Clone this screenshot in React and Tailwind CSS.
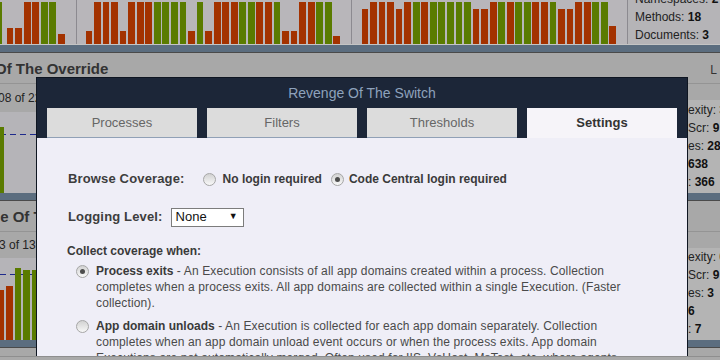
import React from "react";

// bar data: [colour, height]
const seg1 = [["r", 16], ["r", 16], ["r", 42], ["r", 42], ["g", 42], ["g", 42], ["r", 10]];
const seg2 = [
  ["r", 13], ["r", 42], ["r", 42], ["r", 42], ["r", 13], ["r", 42], ["r", 42], ["r", 42],
  ["g", 42], ["g", 42], ["g", 42], ["g", 42], ["r", 13], ["g", 42], ["r", 13], ["r", 42],
  ["r", 42], ["r", 42], ["g", 42], ["g", 42], ["r", 42], ["r", 42], ["g", 42], ["r", 13],
  ["r", 13], ["r", 42], ["r", 42], ["g", 42], ["g", 42], ["r", 8],
];
const seg3 = [
  ["r", 35], ["r", 42], ["r", 42], ["r", 42], ["r", 35], ["r", 42], ["g", 42], ["r", 42],
  ["g", 42], ["g", 42], ["g", 42], ["g", 42], ["g", 42], ["r", 35], ["r", 35], ["r", 42],
  ["g", 42], ["r", 42], ["g", 42], ["g", 42], ["r", 42], ["r", 42], ["g", 42], ["r", 35],
  ["r", 35], ["r", 42], ["r", 42], ["g", 42], ["g", 42], ["r", 18],
];

function Bars({ data }) {
  return data.map(([c, h], i) => (
    <div key={i} className="w-[8.55px] shrink-0 h-full flex items-end">
      <div
        className={`w-[6.8px] ${c === "g" ? "bg-[#5a7b00]" : "bg-[#a33200]"}`}
        style={{ height: h }}
      />
    </div>
  ));
}

function Stat({ label, value }) {
  return (
    <div className="h-[18px] leading-[18px] whitespace-nowrap text-[12px] text-[#222]">
      <span>
        {label}
        <b className="font-bold text-[#111]">{value}</b>
      </span>
    </div>
  );
}

function Radio({ checked, className = "" }) {
  return (
    <span
      className={`w-[13px] h-[13px] shrink-0 rounded-full border border-[#a6a6a6] bg-linear-to-b from-[#d2d2d2] to-[#f8f8f8] flex items-center justify-center ${className}`}
    >
      {checked && <span className="w-[5px] h-[5px] rounded-full bg-[#4d4d4d]" />}
    </span>
  );
}

const Dashes = ({ top }) => (
  <div
    className="absolute left-0 right-0 h-[1px] bg-[repeating-linear-gradient(90deg,#1e2a8c_0_6px,transparent_6px_10px)]"
    style={{ top }}
  />
);

export default function App() {
  return (
    <div className="relative w-[720px] h-[360px] overflow-hidden bg-[#a8a8a8] font-['Liberation_Sans',Arial,sans-serif]">
      {/* top chart strip */}
      <div className="flex h-[44px] bg-[#b8b6ba] pt-[2px]">
        <div className="w-[76px] shrink-0 flex items-end overflow-hidden">
          <div className="w-[2px] h-[42px] bg-[#5a7b00] shrink-0" />
          <div className="ml-[4.7px] flex h-full">
            <Bars data={seg1} />
          </div>
        </div>
        <div className="w-[1px] bg-[#8c8a90] -mt-[2px]" />
        <div className="w-[274px] shrink-0 flex pl-[8.5px] overflow-hidden">
          <Bars data={seg2} />
        </div>
        <div className="w-[1px] bg-[#8c8a90] -mt-[2px]" />
        <div className="w-[275px] shrink-0 flex pl-[9.5px] overflow-hidden">
          <Bars data={seg3} />
        </div>
        <div className="w-[1px] bg-[#8c8a90] -mt-[2px]" />
        <div className="flex-1 overflow-hidden -mt-[2px] pl-[7px] bg-[#b5b4b7]">
          <div className="-mt-[10px]">
            <Stat label="Namespaces: " value="2" />
            <Stat label="Methods: " value="18" />
            <Stat label="Documents: " value="3" />
          </div>
        </div>
      </div>
      <div className="h-[1px] bg-[#c4c4c4]" />
      <div className="h-[8px] bg-[#5b6d7f] border-b border-[#4a4a4a]" />

      {/* section 1 */}
      <div className="h-[31px] pt-[3px] flex items-center justify-between border-b border-[#949494]">
        <span className="ml-[-5px] text-[15px] font-bold text-[#333] whitespace-nowrap">Of The Override</span>
        <span className="mr-[3px] text-[12px] text-[#333]">L</span>
      </div>
      <div className="flex h-[109px]">
        <div className="flex-1 flex flex-col">
          <div className="h-[28px] flex items-center text-[12px] text-[#222] ml-[-2px]">08 of 22</div>
          <div className="relative flex-1 bg-[#b5b4b8] overflow-hidden">
            <Dashes top={22} />
            <div className="relative flex h-full ml-[-3px]">
              <Bars data={[["g", 66]]} />
            </div>
          </div>
        </div>
        <div className="w-[32px] mt-[16px] pt-[1px] bg-[#b4b4b4] overflow-hidden">
          <Stat label="exity: " value="3" />
          <Stat label="Scr: " value="9" />
          <Stat label="es: " value="28" />
          <Stat label="" value="638" />
          <Stat label=": " value="366" />
        </div>
      </div>
      <div className="h-[8px] bg-[#5b6d7f] border-b border-[#4a4a4a]" />

      {/* section 2 */}
      <div className="h-[31px] pt-[2px] flex items-center border-b border-[#949494]">
        <span className="ml-[-54px] text-[15px] font-bold text-[#333] whitespace-nowrap">Revenge Of The Switch</span>
      </div>
      <div className="flex h-[108px]">
        <div className="flex-1 flex flex-col">
          <div className="h-[26px] flex items-center text-[12px] text-[#222] ml-[-1px]">3 of 137</div>
          <div className="relative flex-1 bg-[#b5b4b8] overflow-hidden">
            <Dashes top={16} />
            <div className="relative flex h-full ml-[-2.5px]">
              <Bars data={[["r", 50], ["r", 54], ["g", 72], ["g", 70], ["g", 70]]} />
            </div>
          </div>
        </div>
        <div className="w-[32px] mt-[16px] bg-[#b4b4b4] overflow-hidden">
          <Stat label="exity: " value="0" />
          <Stat label="Scr: " value="9" />
          <Stat label="es: " value="3" />
          <Stat label="" value="6" />
          <Stat label=": " value="7" />
        </div>
      </div>
      <div className="h-[8px] bg-[#5b6d7f] border-b border-[#4a4a4a]" />

      {/* modal */}
      <div className="absolute left-[36px] top-[77px] w-[652px] h-[300px] bg-[#1c2638] border border-[#0e1521] flex flex-col">
        <div className="h-[30px] flex items-center justify-center text-[14px] text-[#8ea2bc]">
          Revenge Of The Switch
        </div>
        <div className="flex gap-[10px] px-[10px]">
          {["Processes", "Filters", "Thresholds"].map((t) => (
            <div
              key={t}
              className="w-[150px] h-[30px] flex items-center justify-center bg-[#dcdcdc] border-b border-[#90a0b6] text-[13px] text-[#666]"
            >
              {t}
            </div>
          ))}
          <div className="w-[150px] h-[30px] flex items-center justify-center bg-[#f6f4f9] text-[13px] font-bold text-[#333]">
            Settings
          </div>
        </div>
        <div className="flex-1 bg-[#efeef7] pl-[31px] pt-[31px] text-[#4a4a4a]">
          <div className="flex items-center h-[20px]">
            <span className="text-[13px] font-bold text-[#3d3d3d] tracking-[0.15px]">Browse Coverage:</span>
            <Radio className="ml-[18px]" />
            <span className="ml-[7px] text-[12px] font-bold text-[#3a3a3a]">No login required</span>
            <Radio checked className="ml-[9px]" />
            <span className="ml-[5px] text-[12px] font-bold text-[#3a3a3a]">Code Central login required</span>
          </div>
          <div className="flex items-center h-[20px] mt-[18px]">
            <span className="text-[13px] font-bold text-[#3d3d3d] tracking-[0.15px]">Logging Level:</span>
            <div className="ml-[8px] w-[73px] h-[19px] bg-white border border-[#7c7c7c] flex items-center justify-between pl-[4px] pr-[5px]">
              <span className="text-[13px] text-[#111]">None</span>
              <span className="text-[9px] text-[#111]">▼</span>
            </div>
          </div>
          <div className="mt-[16px] h-[16px] leading-[16px] text-[12px] font-bold text-[#3a3a3a] -ml-[1px]">
            Collect coverage when:
          </div>
          <div className="flex mt-[4px] ml-[8px] text-[12px] leading-[16px] tracking-[0.13px]">
            <Radio checked className="mt-[1.5px]" />
            <p className="ml-[7px] whitespace-nowrap">
              <b className="font-bold text-[#3a3a3a] tracking-normal">Process exits</b> - An Execution consists of all app domains created within a process. Collection
              <br />
              completes when a process exits. All app domains are collected within a single Execution. (Faster
              <br />
              collection).
            </p>
          </div>
          <div className="flex mt-[7px] ml-[8px] text-[12px] leading-[16px] tracking-[0.13px]">
            <Radio className="mt-[1.5px]" />
            <p className="ml-[7px] whitespace-nowrap">
              <b className="font-bold text-[#3a3a3a] tracking-normal">App domain unloads</b> - An Execution is collected for each app domain separately. Collection
              <br />
              completes when an app domain unload event occurs or when the process exits. App domain
              <br />
              Executions are not automatically merged. Often used for IIS, VsHost, MsTest, etc. where agents
            </p>
          </div>
        </div>
      </div>

      {/* bottom band */}
      <div className="absolute left-0 right-0 bottom-0 h-[4px] bg-[#a9a9a9] border-t border-[#8e8e8e]" />
    </div>
  );
}
